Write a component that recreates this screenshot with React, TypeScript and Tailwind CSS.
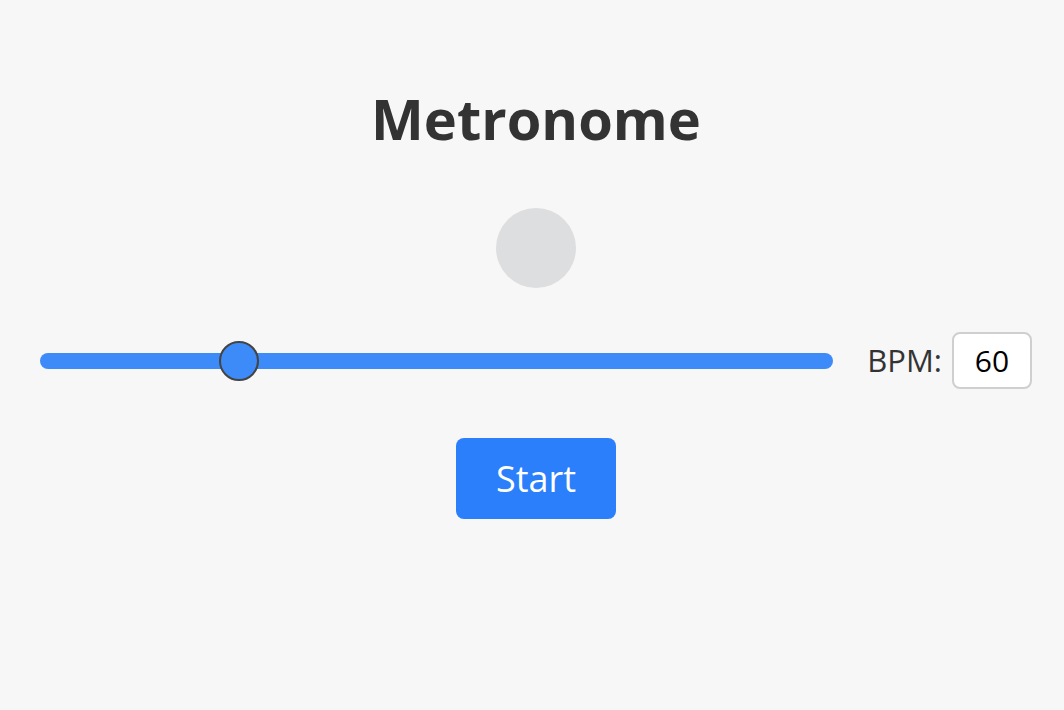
import { useState } from "react";

export default function App() {
  const [bpm] = useState(60);
  // thumb placement measured from the reference (value 60)
  const pct = 0.237;

  return (
    <div className="min-h-[710px] w-full bg-[#f7f7f7] font-['Open_Sans',sans-serif] text-[#333]">
      <div className="flex flex-col items-center pl-10 pr-8 pt-[80px]">
        <h1 className="text-[56px] font-bold leading-[76px] text-[#333]">Metronome</h1>

        <div className="mt-[52px] h-20 w-20 rounded-full bg-[#dddee0]" />

        <div className="mt-[44px] flex w-full items-center">
          <div className="relative h-10 flex-1">
            <div className="absolute left-0 right-0 top-1/2 h-4 -translate-y-1/2 rounded-full bg-[#3d8bf8]" />
            <div
              className="absolute top-1/2 h-10 w-10 -translate-x-1/2 -translate-y-1/2 rounded-full border-2 border-[#444] bg-[#3d8bf8]"
              style={{ left: `calc(20px + (100% - 40px) * ${pct})` }}
            />
          </div>
          <label className="ml-[34px] mr-[10px] text-[31px] text-[#333]">BPM:</label>
          <div className="flex h-[57px] w-[80px] items-center justify-center rounded-lg border-2 border-[#cfcfcf] bg-white text-[30px] text-black">
            {bpm}
          </div>
        </div>

        <button className="mt-[49px] h-[81px] w-[160px] rounded-lg bg-[#2b7ffa] text-[36px] text-white">
          Start
        </button>
      </div>
    </div>
  );
}
